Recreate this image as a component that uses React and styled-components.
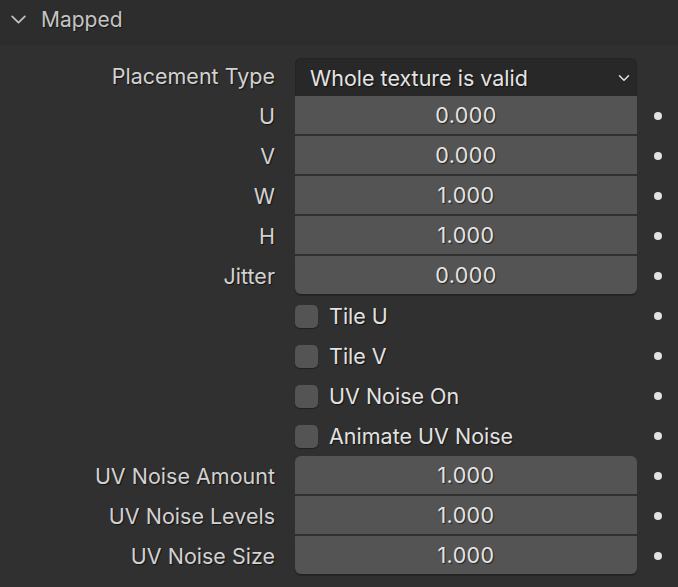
import React from "react";
import styled, { createGlobalStyle } from "styled-components";

const GlobalStyle = createGlobalStyle`
  html, body {
    margin: 0;
    padding: 0;
    background: #303030;
  }
  body {
    font-family: Inter, "Noto Sans", sans-serif;
  }
`;

const radiusFor = (pos) => {
  if (pos === "top") return "6px 6px 0 0";
  if (pos === "bottom") return "0 0 6px 6px";
  if (pos === "single") return "6px";
  return "0";
};

const Panel = styled.div`
  width: 678px;
  height: 587px;
  background: #303030;
  overflow: hidden;
`;

const Header = styled.div`
  height: 45px;
  background: #2d2d2d;
  display: flex;
  align-items: center;
  padding-left: 10px;
  gap: 14px;
  box-sizing: border-box;
  padding-bottom: 7px;
`;

const HeaderTitle = styled.span`
  font-size: 21px;
  color: #c4c4c4;
  text-shadow: 1px 1px 1px rgba(0, 0, 0, 0.5);
`;

const Body = styled.div`
  padding-top: 11px;
  display: flex;
  flex-direction: column;
`;

const Row = styled.div`
  display: grid;
  grid-template-columns: 275px 362px 41px;
  height: 40px;
  align-items: center;
`;

const Label = styled.div`
  text-align: right;
  font-size: 21.5px;
  color: #d2d2d2;
  text-shadow: 1px 1px 1px rgba(0, 0, 0, 0.6);
  white-space: nowrap;
`;

const FieldCell = styled.div`
  grid-column: 2;
  padding-left: 20px;
  height: 40px;
  display: flex;
  flex-direction: column;
  justify-content: ${(p) =>
    p.pos === "top" ? "flex-end" : p.pos === "bottom" ? "flex-start" : "center"};
`;

const NumberField = styled.div`
  height: 38px;
  background: #545454;
  border-radius: ${(p) => radiusFor(p.pos)};
  box-shadow: ${(p) =>
    p.pos === "bottom" || p.pos === "single" ? "0 2px 1px rgba(0,0,0,0.25)" : "none"};
  display: flex;
  align-items: center;
  justify-content: center;
  font-size: 21.5px;
  letter-spacing: 0.4px;
  color: #e4e4e4;
  text-shadow: 1px 1px 1px rgba(0, 0, 0, 0.6);
  margin-bottom: ${(p) => (p.pos === "top" || p.pos === "middle" ? "2px" : "0")};
`;

const Dropdown = styled.div`
  height: 38px;
  background: #282828;
  border: 1px solid #242424;
  border-bottom: none;
  box-sizing: border-box;
  border-radius: 6px 6px 0 0;
  display: flex;
  align-items: center;
  justify-content: space-between;
  padding: 0 6px 0 14px;
  font-size: 21.5px;
  color: #e4e4e4;
  text-shadow: 1px 1px 1px rgba(0, 0, 0, 0.6);
`;

const CheckCell = styled.div`
  grid-column: 2;
  padding-left: 20px;
  display: flex;
  align-items: center;
  gap: 11px;
`;

const Checkbox = styled.div`
  width: 23px;
  height: 23px;
  border-radius: 5px;
  background: #545454;
  box-shadow: 0 1px 1px rgba(0, 0, 0, 0.35);
  flex-shrink: 0;
`;

const CheckLabel = styled.span`
  font-size: 21.5px;
  color: #e2e2e2;
  text-shadow: 1px 1px 1px rgba(0, 0, 0, 0.6);
`;

const DotCell = styled.div`
  grid-column: 3;
  display: flex;
  justify-content: center;
`;

const Dot = styled.div`
  width: 8px;
  height: 8px;
  border-radius: 50%;
  background: #e2e2e2;
`;

const Chevron = ({ size = 16, color = "#c4c4c4", width = 2 }) => (
  <svg width={size} height={size} viewBox="0 0 16 16" fill="none">
    <path
      d="M2 5 L8 11 L14 5"
      stroke={color}
      strokeWidth={width}
      strokeLinecap="round"
      strokeLinejoin="round"
    />
  </svg>
);

const numberRows = [
  { label: "U", value: "0.000", pos: "middle" },
  { label: "V", value: "0.000", pos: "middle" },
  { label: "W", value: "1.000", pos: "middle" },
  { label: "H", value: "1.000", pos: "middle" },
  { label: "Jitter", value: "0.000", pos: "bottom" },
];

const checkRows = ["Tile U", "Tile V", "UV Noise On", "Animate UV Noise"];

const noiseRows = [
  { label: "UV Noise Amount", value: "1.000", pos: "top" },
  { label: "UV Noise Levels", value: "1.000", pos: "middle" },
  { label: "UV Noise Size", value: "1.000", pos: "bottom" },
];

export default function App() {
  return (
    <>
      <GlobalStyle />
      <Panel>
        <Header>
          <Chevron size={17} width={1.6} />
          <HeaderTitle>Mapped</HeaderTitle>
        </Header>
        <Body>
          <Row>
            <Label>Placement Type</Label>
            <FieldCell pos="top">
              <Dropdown>
                <span>Whole texture is valid</span>
                <Chevron size={12} color="#e4e4e4" width={2} />
              </Dropdown>
            </FieldCell>
          </Row>
          {numberRows.map((r) => (
            <Row key={r.label}>
              <Label>{r.label}</Label>
              <FieldCell pos={r.pos}>
                <NumberField pos={r.pos}>{r.value}</NumberField>
              </FieldCell>
              <DotCell>
                <Dot />
              </DotCell>
            </Row>
          ))}
          {checkRows.map((name) => (
            <Row key={name}>
              <CheckCell>
                <Checkbox />
                <CheckLabel>{name}</CheckLabel>
              </CheckCell>
              <DotCell>
                <Dot />
              </DotCell>
            </Row>
          ))}
          {noiseRows.map((r) => (
            <Row key={r.label}>
              <Label>{r.label}</Label>
              <FieldCell pos={r.pos}>
                <NumberField pos={r.pos}>{r.value}</NumberField>
              </FieldCell>
              <DotCell>
                <Dot />
              </DotCell>
            </Row>
          ))}
        </Body>
      </Panel>
    </>
  );
}
